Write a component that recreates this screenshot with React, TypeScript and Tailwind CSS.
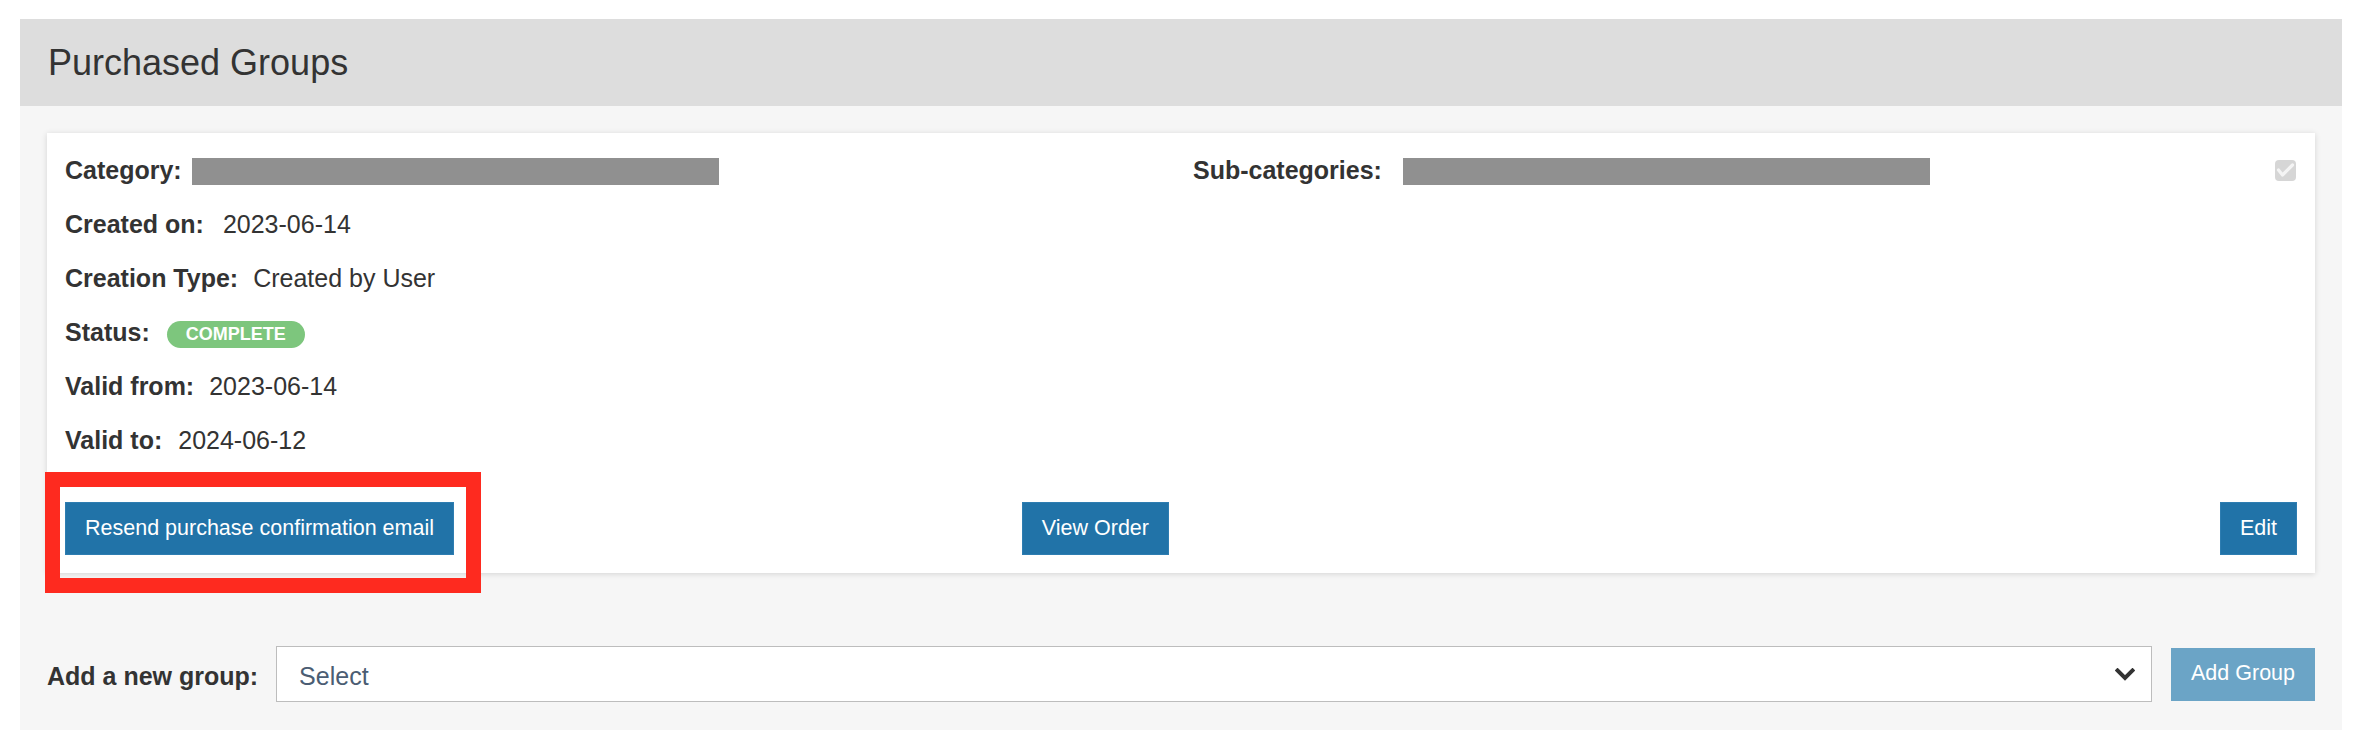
export default function App() {
  const row = "h-[54px] whitespace-nowrap text-[25px] leading-[54px]";
  const btn =
    "flex h-[53px] items-center border border-[#2e7db1] bg-[#2173a8] px-[19px] text-[21.5px] leading-none text-white";
  return (
    <div className="relative min-h-[750px] bg-white pt-[19px] font-['Liberation_Sans',Arial,Helvetica,sans-serif] text-[#333]">
      <div className="ml-[20px] w-[2322px] bg-[#f6f6f6]">
        <div className="flex h-[87px] items-center bg-[#dddddd] pl-[28px]">
          <h2 className="text-[36px] leading-none text-[#333]">Purchased Groups</h2>
        </div>
        <div className="px-[27px] pt-[27px] pb-[28px]">
          <div className="bg-white px-[18px] pt-[10px] pb-[18px] shadow-[0_1px_6px_rgba(0,0,0,0.14)]">
            <div className="grid grid-cols-2 gap-x-[24px]">
              <div>
                <div className={row}>
                  <span className="font-bold">Category:</span>
                  <span className="ml-[10px] inline-block h-[27px] w-[527px] bg-[#909090] align-[-6px]" />
                </div>
                <div className={row}>
                  <span className="font-bold">Created on:</span>
                  <span className="ml-[19px]">2023-06-14</span>
                </div>
                <div className={row}>
                  <span className="font-bold">Creation Type:</span>
                  <span className="ml-[15px]">Created by User</span>
                </div>
                <div className={row}>
                  <span className="font-bold">Status:</span>
                  <span className="ml-[17px] inline-block h-[27px] rounded-full bg-[#7dc67d] px-[19px] align-middle text-[18px] font-bold leading-[27px] text-white">
                    COMPLETE
                  </span>
                </div>
                <div className={row}>
                  <span className="font-bold">Valid from:</span>
                  <span className="ml-[15px]">2023-06-14</span>
                </div>
                <div className={row}>
                  <span className="font-bold">Valid to:</span>
                  <span className="ml-[16px]">2024-06-12</span>
                </div>
              </div>
              <div>
                <div className="flex h-[54px] items-center justify-between">
                  <div className="whitespace-nowrap text-[25px] leading-[54px]">
                    <span className="font-bold">Sub-categories:</span>
                    <span className="ml-[21px] inline-block h-[27px] w-[527px] bg-[#909090] align-[-6px]" />
                  </div>
                  <span className="mr-[1px] flex h-[21px] w-[21px] items-center justify-center rounded-[4px] bg-[#d6d6d6]">
                    <svg width="21" height="21" viewBox="0 0 21 21">
                      <polyline
                        points="3.5,10 7.5,15 17.5,5"
                        fill="none"
                        stroke="#f4f4f4"
                        strokeWidth="3.2"
                        strokeLinecap="round"
                        strokeLinejoin="round"
                      />
                    </svg>
                  </span>
                </div>
              </div>
            </div>
            <div className="mt-[35px] grid grid-cols-2 gap-x-[24px]">
              <div className="flex justify-between">
                <button className={btn}>Resend purchase confirmation email</button>
                <button className={btn}>View Order</button>
              </div>
              <div className="flex justify-end">
                <button className={btn}>Edit</button>
              </div>
            </div>
          </div>
          <div className="mt-[73px] flex items-center">
            <label className="whitespace-nowrap pt-[5px] text-[25px] font-bold">Add a new group:</label>
            <div className="ml-[18px] flex h-[56px] flex-1 items-center justify-between border border-[#bdbdbd] bg-white pl-[22px] pr-[16px]">
              <span className="pt-[5px] text-[25px] text-[#4b5d73]">Select</span>
              <svg width="20" height="13" viewBox="0 0 20 13">
                <polyline
                  points="2.5,2.5 10,10 17.5,2.5"
                  fill="none"
                  stroke="#333"
                  strokeWidth="4"
                  strokeLinecap="square"
                />
              </svg>
            </div>
            <button className="ml-[19px] flex h-[53px] items-center bg-[#6ba4c6] px-[20px] text-[21.5px] leading-none text-white">
              Add Group
            </button>
          </div>
        </div>
      </div>
      <div className="absolute left-[45px] top-[472px] h-[121px] w-[436px] border-[15px] border-[#fe2a1f]" />
    </div>
  );
}
